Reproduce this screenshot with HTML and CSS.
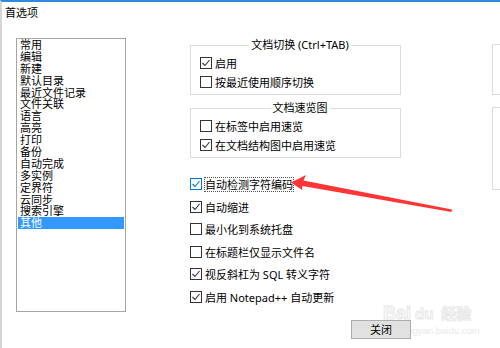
FILE: index.html
```html
<!DOCTYPE html>
<html lang="zh-CN">
  <head>
    <meta charset="UTF-8" />
    <meta name="viewport" content="width=device-width, initial-scale=1.0" />
    <title>首选项</title>
    <link rel="stylesheet" href="styles.css">
  </head>
  <body>
    <div class="dialog">
      <div class="dialog-title">首选项</div>

      <div class="main">
        <ul class="page-list">
          <li>常用</li>
          <li>编辑</li>
          <li>新建</li>
          <li>默认目录</li>
          <li>最近文件记录</li>
          <li>文件关联</li>
          <li>语言</li>
          <li>高亮</li>
          <li>打印</li>
          <li>备份</li>
          <li>自动完成</li>
          <li>多实例</li>
          <li>定界符</li>
          <li>云同步</li>
          <li>搜索引擎</li>
          <li class="selected">其他</li>
        </ul>

        <div class="settings">
          <fieldset class="group">
            <legend>文档切换 (Ctrl+TAB)</legend>
            <div class="check"><span class="box"><svg viewBox="0 0 10 10"><path d="M1.5 5 L4 7.5 L8.5 2" /></svg></span>启用</div>
            <div class="check"><span class="box"></span>按最近使用顺序切换</div>
          </fieldset>

          <fieldset class="group">
            <legend>文档速览图</legend>
            <div class="check"><span class="box"></span>在标签中启用速览</div>
            <div class="check"><span class="box"><svg viewBox="0 0 10 10"><path d="M1.5 5 L4 7.5 L8.5 2" /></svg></span>在文档结构图中启用速览</div>
          </fieldset>

          <div class="options">
            <div class="check"><span class="box hover"><svg viewBox="0 0 10 10"><path d="M1.5 5 L4 7.5 L8.5 2" /></svg></span><span class="focused">自动检测字符编码</span></div>
            <div class="check"><span class="box"><svg viewBox="0 0 10 10"><path d="M1.5 5 L4 7.5 L8.5 2" /></svg></span>自动缩进</div>
            <div class="check"><span class="box"></span>最小化到系统托盘</div>
            <div class="check"><span class="box"></span>在标题栏仅显示文件名</div>
            <div class="check"><span class="box"><svg viewBox="0 0 10 10"><path d="M1.5 5 L4 7.5 L8.5 2" /></svg></span>视反斜杠为 SQL 转义字符</div>
            <div class="check"><span class="box"><svg viewBox="0 0 10 10"><path d="M1.5 5 L4 7.5 L8.5 2" /></svg></span>启用 Notepad++ 自动更新</div>
          </div>

          <div class="footer">
            <button class="close-btn">关闭</button>
          </div>
        </div>

        <!-- 右侧分组，只露出左边框 -->
        <div class="side">
          <div class="side-box side-a"></div>
          <div class="side-box side-b"></div>
        </div>
      </div>
    </div>

    <!-- 标注箭头 -->
    <svg class="arrow" viewBox="0 0 500 348" width="500" height="348">
      <polygon points="291,182.5 306,175 303.5,180.5 452,209.5 451.5,212 302.5,186 302,190" />
    </svg>

    <div class="watermark"><span class="wm-bai">Bai</span><span class="wm-du">du</span><span class="wm-cn">经验</span></div>
    <div class="watermark-url">jingyan.baidu.com</div>
  </body>
</html>
```

FILE: styles.css
```css
* {
  box-sizing: border-box;
}
html,
body {
  margin: 0;
  padding: 0;
}
body {
  position: relative;
  width: 500px;
  height: 348px;
  overflow: hidden;
  background-color: #fff;
  font-family: "Noto Sans", "Noto Sans CJK SC", sans-serif;
  font-size: 11px;
  color: #000;
}
.dialog {
  height: 348px;
  overflow: hidden;
  border-top: 2px solid #2b8ce0;
  border-left: 2px solid #d6d6d6;
}
.dialog-title {
  height: 36px;
  padding: 3px 0 0 3px;
  line-height: 15px;
}
.main {
  display: flex;
  align-items: flex-start;
  padding-left: 14px;
}
.page-list {
  flex: none;
  width: 110px;
  height: 274px;
  margin: 0;
  padding: 0 1px;
  list-style: none;
  border: 1px solid #a5a5a5;
}
.page-list li {
  height: 11.9px;
  line-height: 11.9px;
  padding-left: 2px;
  white-space: nowrap;
}
.page-list li.selected {
  background-color: #3399ff;
  color: white;
}
.settings {
  flex: none;
  margin-left: 64px;
}
.group {
  width: 211px;
  margin: 0;
  padding: 1px 0 3px 9px;
  border: 1px solid #dcdcdc;
}
.group legend {
  margin: 0 auto;
  padding: 0 2px;
  line-height: 14px;
}
.group + .group {
  margin-top: 6px;
}
.check {
  display: flex;
  align-items: center;
  height: 19px;
  white-space: nowrap;
}
.box {
  flex: none;
  display: flex;
  width: 12px;
  height: 12px;
  margin-right: 3px;
  border: 1px solid #333;
  background-color: #fff;
}
.box svg {
  width: 10px;
  height: 10px;
  fill: none;
  stroke: #333;
  stroke-width: 1.1;
}
.box.hover {
  border-color: #0078d7;
}
.box.hover svg {
  stroke: #0078d7;
}
.options {
  margin-top: 15px;
}
.options .check {
  height: 22.5px;
}
.focused {
  line-height: 13px;
  outline: 1px dotted #555;
}
.footer {
  margin-top: 12px;
  padding-left: 161px;
}
.close-btn {
  position: relative;
  z-index: 2;
  width: 60px;
  height: 19px;
  padding: 0;
  border: 1px solid #adadad;
  background-color: #e1e1e1;
  font: inherit;
  line-height: 17px;
  color: #000;
}
.side {
  flex: none;
  width: 8px;
  margin-left: 81px;
  overflow: hidden;
}
.side-box {
  width: 40px;
  border: 1px solid #dcdcdc;
}
.side-a {
  height: 51px;
  margin-top: 6px;
}
.side-b {
  height: 83px;
  margin-top: 12px;
}
.arrow {
  position: absolute;
  left: 0;
  top: 0;
  pointer-events: none;
  z-index: 3;
}
.arrow polygon {
  fill: #ff3535;
}
.watermark {
  position: absolute;
  left: 383px;
  top: 303px;
  z-index: 1;
  font-family: "Liberation Sans", sans-serif;
  font-weight: bold;
  line-height: 20px;
  color: #fcfcfc;
  -webkit-text-stroke: 1px #e8e8e8;
  white-space: nowrap;
}
.wm-bai {
  font-size: 18px;
}
.wm-du {
  margin-left: 4px;
  font-size: 15px;
}
.wm-cn {
  margin-left: 8px;
  font-family: "Noto Sans CJK SC", sans-serif;
  font-size: 15px;
}
.watermark-url {
  position: absolute;
  left: 403px;
  top: 325px;
  z-index: 1;
  font-family: "Liberation Sans", sans-serif;
  font-size: 9.5px;
  color: #e8e8e8;
  white-space: nowrap;
}
```
